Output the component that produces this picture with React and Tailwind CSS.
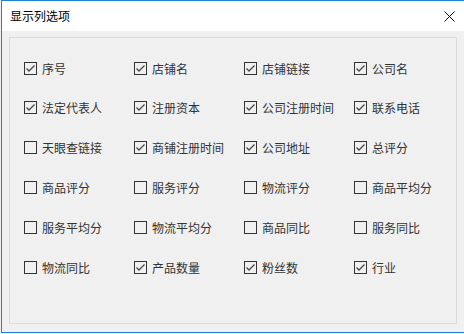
import React from "react";

const items = [
  ["序号", true], ["店铺名", true], ["店铺链接", true], ["公司名", true],
  ["法定代表人", true], ["注册资本", true], ["公司注册时间", true], ["联系电话", true],
  ["天眼查链接", false], ["商铺注册时间", true], ["公司地址", true], ["总评分", true],
  ["商品评分", false], ["服务评分", false], ["物流评分", false], ["商品平均分", false],
  ["服务平均分", false], ["物流平均分", false], ["商品同比", false], ["服务同比", false],
  ["物流同比", false], ["产品数量", true], ["粉丝数", true], ["行业", true],
];

function Box({ checked }) {
  return (
    <div className="w-[13px] h-[13px] border border-[#333333] bg-[#f0f0f0] flex items-center justify-center shrink-0">
      {checked && (
        <svg width="11" height="11" viewBox="0 0 11 11">
          <path d="M1.5 5.5 L4 8 L9.5 2.5" fill="none" stroke="#4a4a4a" strokeWidth="1.3" />
        </svg>
      )}
    </div>
  );
}

export default function App() {
  return (
    <div
      className="w-[464px] h-[334px] bg-[#f0f0f0] overflow-hidden"
      style={{ fontFamily: '"Noto Sans CJK SC", "Noto Sans", sans-serif' }}
    >
      <div className="ml-[1px] w-[463px] h-[333px] border-t border-l border-b border-[#1883d7] flex flex-col bg-[#f0f0f0]">
        <div className="h-[30px] bg-white flex items-center justify-between pl-[8px] pr-[9px] shrink-0">
          <span className="text-[12px] leading-none text-black">显示列选项</span>
          <svg width="11" height="11" viewBox="0 0 11 11">
            <path d="M0.5 0.5 L10.5 10.5 M10.5 0.5 L0.5 10.5" stroke="#111" strokeWidth="1" />
          </svg>
        </div>
        <div className="mt-[6px] ml-[7px] w-[448px] h-[287px] border border-[#dcdcdc] pt-[24px] pl-[14px]">
          <div className="grid grid-cols-[110px_110px_110px_110px] auto-rows-[40px] -mt-[1px]">
            {items.map(([label, checked], i) => (
              <div key={label} className={i < 4 ? "flex items-start gap-[5px] h-[40px] mt-[1px]" : "flex items-start gap-[5px] h-[40px]"}>
                <Box checked={checked} />
                <span className="text-[12px] leading-[13px] text-[#333333] whitespace-nowrap">{label}</span>
              </div>
            ))}
          </div>
        </div>
      </div>
    </div>
  );
}
